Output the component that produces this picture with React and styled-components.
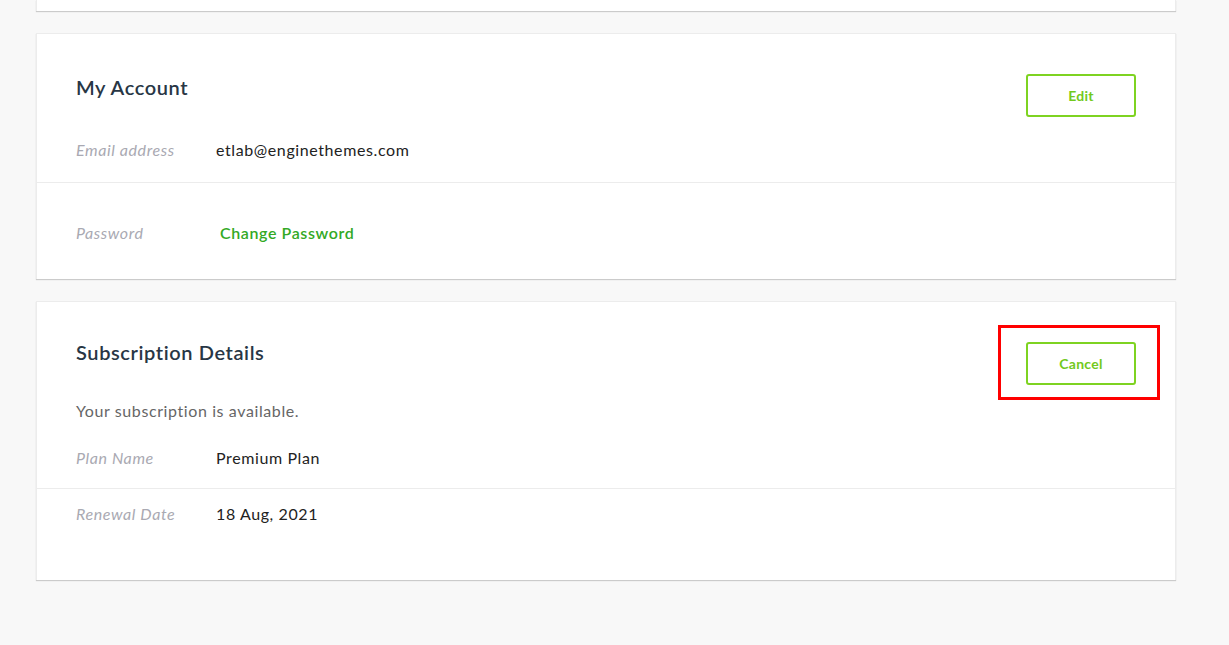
import styled, { createGlobalStyle } from 'styled-components';

const GlobalStyle = createGlobalStyle`
    body {
        margin: 0;
        background: #f8f8f8;
        font-family: Lato, "Open Sans", sans-serif;
        letter-spacing: 0.6px;
        color: #333;
    }
`;

const Page = styled.div`
    width: 1140px;
    padding: 0 0 60px 36px;
    display: flex;
    flex-direction: column;
    gap: 22px;
`;

const Card = styled.section`
    background: #fff;
    border: 1px solid #ececec;
    border-bottom: none;
    box-shadow: 0 1px 1px rgba(0, 0, 0, 0.18);
    padding-top: ${p => p.$top || 40}px;
    padding-bottom: ${p => p.$bottom || 0}px;
`;

const CardStub = styled.div`
    background: #fff;
    height: 11px;
    border-left: 1px solid #ececec;
    border-right: 1px solid #ececec;
    box-shadow: 0 1px 1px rgba(0, 0, 0, 0.18);
`;

const Header = styled.div`
    display: flex;
    justify-content: space-between;
    align-items: flex-start;
    padding: 0 39px;
`;

const Title = styled.h2`
    margin: ${p => p.$offset || 0}px 0 0;
    font-size: 20px;
    line-height: 28px;
    font-weight: 600;
    color: #283645;
`;

const OutlineButton = styled.button`
    position: relative;
    width: 110px;
    height: 43px;
    margin: 0;
    background: #fff;
    border: 2px solid #7ed321;
    border-radius: 3px;
    color: #72c91c;
    font-family: Lato, "Open Sans", sans-serif;
    font-size: 14px;
    font-weight: 700;
    letter-spacing: 0.3px;
    cursor: pointer;
`;

const Highlight = styled.span`
    position: absolute;
    left: -30px;
    right: -26px;
    top: -19px;
    bottom: -17px;
    border: 3px solid #ff0000;
    pointer-events: none;
`;

const Note = styled.p`
    margin: 14px 0 0;
    padding: 0 39px;
    font-size: 16px;
    line-height: 24px;
    color: #666;
`;

const Row = styled.div`
    display: flex;
    align-items: center;
    padding: ${p => p.$pad || '20px 39px'};
    font-size: 16px;
    line-height: 24px;
    border-bottom: ${p => (p.$divider ? '1px solid #ececec' : 'none')};
`;

const Label = styled.span`
    width: ${p => p.$w || 140}px;
    flex-shrink: 0;
    font-style: italic;
    color: #a9a9b2;
`;

const Value = styled.span`
    color: #222;
`;

const Link = styled.a`
    color: #33a925;
    font-weight: 600;
    text-decoration: none;
    cursor: pointer;
`;

export default function App() {
    return (
        <>
            <GlobalStyle />
            <Page>
                <CardStub />

                <Card>
                    <Header>
                        <Title $offset={-1}>My Account</Title>
                        <OutlineButton>Edit</OutlineButton>
                    </Header>
                    <Row $divider $pad="21px 39px 20px">
                        <Label>Email address</Label>
                        <Value>etlab@enginethemes.com</Value>
                    </Row>
                    <Row $pad="38px 39px 34px">
                        <Label $w={144}>Password</Label>
                        <Link>Change Password</Link>
                    </Row>
                </Card>

                <Card $bottom={54}>
                    <Header>
                        <Title $offset={-4}>Subscription Details</Title>
                        <OutlineButton>
                            Cancel
                            <Highlight />
                        </OutlineButton>
                    </Header>
                    <Note>Your subscription is available.</Note>
                    <Row $divider $pad="23px 39px 18px">
                        <Label>Plan Name</Label>
                        <Value>Premium Plan</Value>
                    </Row>
                    <Row $pad="13px 39px 0">
                        <Label>Renewal Date</Label>
                        <Value>18 Aug, 2021</Value>
                    </Row>
                </Card>
            </Page>
        </>
    );
}
